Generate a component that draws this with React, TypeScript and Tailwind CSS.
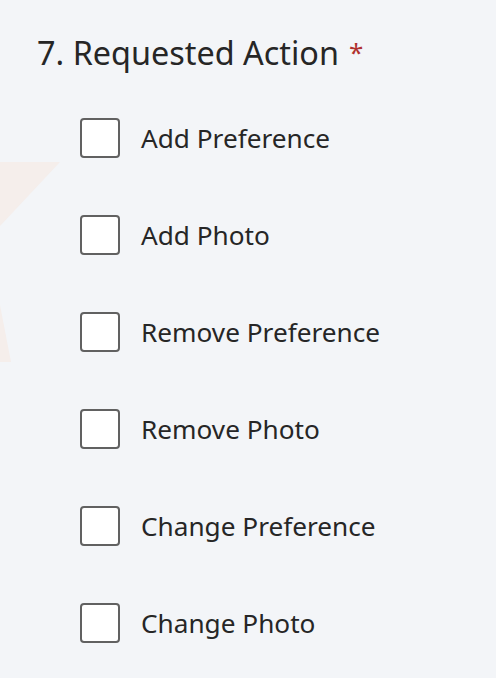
import React from "react";

const options = [
  "Add Preference",
  "Add Photo",
  "Remove Preference",
  "Remove Photo",
  "Change Preference",
  "Change Photo",
];

export default function App() {
  return (
    <div
      className="relative w-[496px] h-[678px] overflow-hidden bg-[#f3f5f8] text-[#262626]"
      style={{ fontFamily: '"Noto Sans", "Open Sans", sans-serif' }}
    >
      {/* faint watermark shape at the left edge */}
      <svg
        className="absolute left-0 top-0"
        width="80"
        height="400"
        viewBox="0 0 80 400"
      >
        <polygon points="0,162 60,162 0,226" fill="#f5eeeb" />
        <polygon points="0,305 11,362 0,362" fill="#f5eeeb" />
      </svg>

      <div className="relative pl-[37px] pt-[30px]">
        <h2 className="text-[32.4px] leading-[44px] flex items-start">
          <span>7. Requested Action</span>
          <span className="ml-[10px] text-[26px] text-[#b0312f]">*</span>
        </h2>

        <div className="mt-[44px] ml-[43px] flex flex-col gap-[57px]">
          {options.map((label) => (
            <label key={label} className="flex items-center gap-[21px] h-[40px]">
              <span className="w-[40px] h-[40px] rounded-[4px] border-2 border-[#616161] bg-white shrink-0" />
              <span className="text-[26.2px] leading-[40px]">{label}</span>
            </label>
          ))}
        </div>
      </div>
    </div>
  );
}
